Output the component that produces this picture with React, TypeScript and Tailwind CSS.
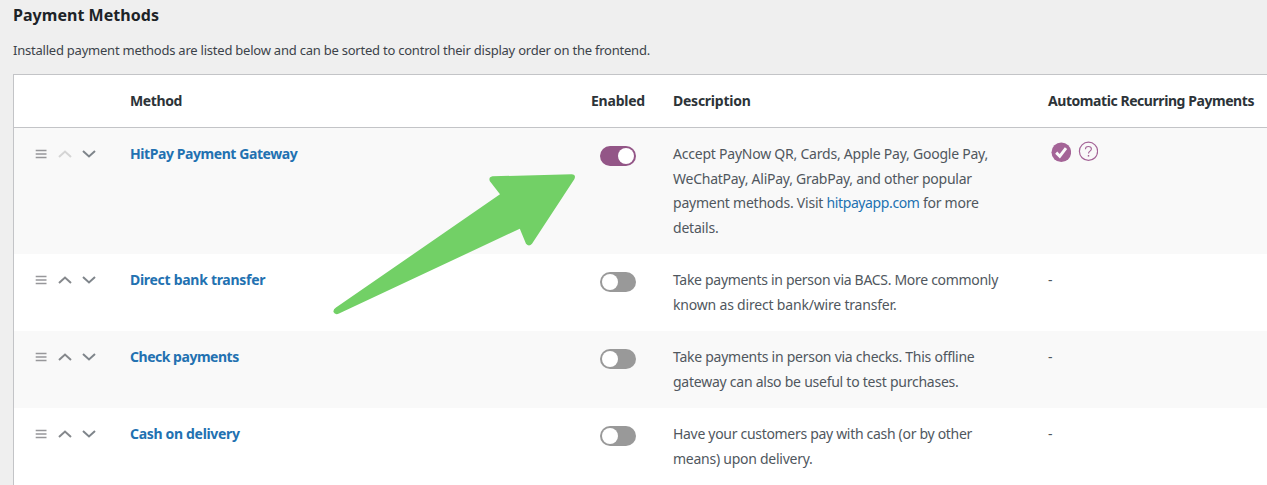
type Run = { text: string; tracking: string };
type Line = Run & { link?: Run; after?: Run };
type Method = {
  name: string;
  tracking: string;
  enabled: boolean;
  first?: boolean;
  lines: Line[];
  recurring: boolean;
};

const methods: Method[] = [
  {
    name: "HitPay Payment Gateway",
    tracking: "tracking-[-0.425px]",
    enabled: true,
    first: true,
    recurring: true,
    lines: [
      { text: "Accept PayNow QR, Cards, Apple Pay, Google Pay,", tracking: "tracking-[-0.226px]" },
      { text: "WeChatPay, AliPay, GrabPay, and other popular", tracking: "tracking-[-0.25px]" },
      {
        text: "payment methods. Visit ",
        tracking: "tracking-[-0.232px]",
        link: { text: "hitpayapp.com", tracking: "tracking-[-0.387px]" },
        after: { text: " for more", tracking: "tracking-[-0.25px]" },
      },
      { text: "details.", tracking: "tracking-[-0.199px]" },
    ],
  },
  {
    name: "Direct bank transfer",
    tracking: "tracking-[-0.29px]",
    enabled: false,
    recurring: false,
    lines: [
      { text: "Take payments in person via BACS. More commonly", tracking: "tracking-[-0.302px]" },
      { text: "known as direct bank/wire transfer.", tracking: "tracking-[-0.188px]" },
    ],
  },
  {
    name: "Check payments",
    tracking: "tracking-[-0.48px]",
    enabled: false,
    recurring: false,
    lines: [
      { text: "Take payments in person via checks. This offline", tracking: "tracking-[-0.258px]" },
      { text: "gateway can also be useful to test purchases.", tracking: "tracking-[-0.247px]" },
    ],
  },
  {
    name: "Cash on delivery",
    tracking: "tracking-[-0.32px]",
    enabled: false,
    recurring: false,
    lines: [
      { text: "Have your customers pay with cash (or by other", tracking: "tracking-[-0.307px]" },
      { text: "means) upon delivery.", tracking: "tracking-[-0.258px]" },
    ],
  },
];

function SortControls({ first }: { first?: boolean }) {
  return (
    <div className="flex h-[24px] items-center pl-[21px]">
      <svg className="h-3 w-3" viewBox="0 0 12 12" fill="none" stroke="#97979a" strokeWidth="1.6">
        <path d="M.7 2.5h10.8M.7 6h10.8M.7 9.5h10.8" />
      </svg>
      <svg
        className={first ? "ml-[11px] h-3 w-[14px] text-[#d5d5d5]" : "ml-[11px] h-3 w-[14px] text-[#85888c]"}
        viewBox="0 0 14 12"
        fill="none"
        stroke="currentColor"
        strokeWidth="2"
      >
        <path d="M1 9.1 7 3.6l6 5.5" />
      </svg>
      <svg className="ml-[10px] h-3 w-[14px] text-[#7f858b]" viewBox="0 0 14 12" fill="none" stroke="currentColor" strokeWidth="2">
        <path d="M1 3 7 8.5 13 3" />
      </svg>
    </div>
  );
}

function Toggle({ on }: { on: boolean }) {
  return (
    <button
      role="switch"
      aria-checked={on}
      className={
        on
          ? "mt-1 ml-[9px] flex h-5 w-9 items-center justify-end rounded-full bg-[#935687] px-0.5"
          : "mt-1 ml-[9px] flex h-5 w-9 items-center rounded-full bg-[#999999] px-0.5"
      }
    >
      <span className="size-4 rounded-full bg-white" />
    </button>
  );
}

function RecurringStatus() {
  return (
    <div className="-mt-px flex pl-[3px]">
      <svg className="mt-px h-5 w-5" viewBox="0 0 20 20">
        <circle cx="10.3" cy="10.2" r="9.8" fill="#a46497" />
        <path d="M5.2 10.6 8.8 14.2 15 6.2" fill="none" stroke="#fafafa" strokeWidth="2.9" />
      </svg>
      <svg className="ml-[7px] h-5 w-5" viewBox="0 0 20 20" fill="none" stroke="#a46497">
        <circle cx="10.5" cy="10.3" r="9.1" strokeWidth="1.2" />
        <path d="M7.4 8.3c0-1.8 1.2-2.8 3-2.8s3 1 3 2.5c0 2-2.9 2.2-2.9 4.4" strokeWidth="1.1" />
        <path d="M10.5 14v1.6" strokeWidth="1.4" />
      </svg>
    </div>
  );
}

const columns = "grid grid-cols-[116px_461px_82px_375px_1fr]";

export default function App() {
  return (
    <main className="relative h-[485px] w-full overflow-hidden bg-[#efefef] pl-[13px] font-['Noto_Sans',sans-serif] text-[#50575e]">
      <h2 className="pt-[3px] text-[16px] leading-6 font-bold tracking-[0.037px] text-[#1d2327]">Payment Methods</h2>
      <p className="mt-[13px] text-[13px] leading-5 tracking-[-0.227px] whitespace-nowrap text-[#3c434a]">
        Installed payment methods are listed below and can be sorted to control their display order on the frontend.
      </p>
      <section className="mt-[14px] border-t border-l border-[#c3c4c7] bg-white text-[14px]">
        <header className={`${columns} h-[53px] items-center border-b border-[#c3c4c7] pb-0.5 font-bold whitespace-nowrap text-[#2c3338]`}>
          <span />
          <span className="tracking-[-0.389px]">Method</span>
          <span className="tracking-[-0.222px]">Enabled</span>
          <span className="tracking-[-0.251px]">Description</span>
          <span className="tracking-[-0.436px]">Automatic Recurring Payments</span>
        </header>
        {methods.map((m) => (
          <div key={m.name} className={`${columns} py-[14px] leading-[24.5px] odd:bg-white even:bg-[#f9f9f9]`}>
            <SortControls first={m.first} />
            <div>
              <a className={`font-bold text-[#2271b1] ${m.tracking}`}>{m.name}</a>
            </div>
            <div>
              <Toggle on={m.enabled} />
            </div>
            <div>
              {m.lines.map((l) => (
                <div key={l.text} className="whitespace-pre">
                  <span className={l.tracking}>{l.text}</span>
                  {l.link && <a className={`text-[#2271b1] ${l.link.tracking}`}>{l.link.text}</a>}
                  {l.after && <span className={l.after.tracking}>{l.after.text}</span>}
                </div>
              ))}
            </div>
            <div>{m.recurring ? <RecurringStatus /> : "-"}</div>
          </div>
        ))}
      </section>
      <svg className="pointer-events-none absolute top-[170px] left-[330px] h-[150px] w-[250px]" viewBox="330 170 250 150" fill="#72d066">
        <path d="M492.5 176.3 571.5 174.2Q576.5 174.6 574.3 179.3L532 243.8Q529 247.3 526 243.8L519.8 228.7 339 313.6Q335 315.2 333.5 312Q333 309.6 336 307.5L500 194.3 489.9 181.2Q488.2 177.2 492.5 176.3Z" />
      </svg>
    </main>
  );
}
